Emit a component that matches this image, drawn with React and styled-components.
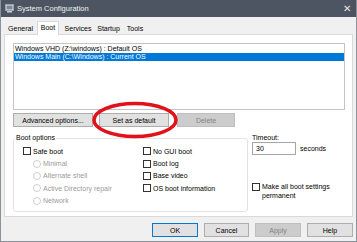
import React from 'react';
import styled, { createGlobalStyle } from 'styled-components';

const GlobalStyle = createGlobalStyle`
  html, body {
    margin: 0;
    padding: 0;
    background: #f0f0f0;
  }
  body {
    font-family: "Liberation Sans", Arial, sans-serif;
    font-size: 7px;
    color: #000;
  }
`;

const Window = styled.div`
  position: relative;
  width: 357px;
  height: 242px;
  box-sizing: border-box;
  background: #f0f0f0;
  border: 1px solid #8c9299;
  border-top: none;
  display: flex;
  flex-direction: column;
  overflow: hidden;
`;

const TitleBar = styled.div`
  height: 17px;
  margin: 0 -1px;
  background: #4c5561;
  color: #f2f2f2;
  display: flex;
  align-items: center;
  padding: 0 0 0 5px;
  font-size: 7.5px;
`;

const TitleText = styled.span`
  margin-left: 3px;
  flex: 1;
`;

const Close = styled.span`
  width: 20px;
  text-align: center;
  font-size: 10px;
  color: #e6e6e6;
`;

const TabStrip = styled.div`
  display: flex;
  align-items: flex-end;
  height: 16px;
  padding: 0 0 0 3px;
  margin-top: 1px;
`;

const Tab = styled.div`
  width: ${p => p.$w}px;
  height: ${p => (p.$active ? '14px' : '12px')};
  box-sizing: border-box;
  display: flex;
  justify-content: center;
  line-height: 12px;
  white-space: nowrap;
  background: ${p => (p.$active ? '#fff' : 'transparent')};
  border: 1px solid ${p => (p.$active ? '#d9d9d9' : 'transparent')};
  border-bottom: none;
  margin-bottom: ${p => (p.$active ? '-1px' : '0')};
  position: relative;
  z-index: 1;
`;

const Panel = styled.div`
  margin: 0 3px;
  height: 183px;
  box-sizing: border-box;
  background: #fff;
  border: 1px solid #d9d9d9;
  padding: 8px 7px 0 8px;
`;

const ListBox = styled.div`
  height: 67px;
  box-sizing: border-box;
  border: 1px solid #c4c4c4;
  padding-top: 1px;
`;

const ListItem = styled.div`
  height: 7.8px;
  line-height: 7.8px;
  padding-left: 1px;
  white-space: nowrap;
  background: ${p => (p.$selected ? '#0078d7' : 'transparent')};
  color: ${p => (p.$selected ? '#fff' : '#000')};
`;

const ButtonRow = styled.div`
  display: flex;
  margin-top: 3px;
`;

const Button = styled.div`
  width: ${p => p.$w}px;
  height: 14px;
  box-sizing: border-box;
  display: flex;
  align-items: center;
  justify-content: center;
  white-space: nowrap;
  background: ${p => (p.$disabled ? '#cccccc' : '#e1e1e1')};
  border: 1px solid ${p => (p.$default ? '#0078d7' : p.$disabled ? '#bfbfbf' : '#adadad')};
  color: ${p => (p.$disabled ? '#838383' : '#000')};
  margin-left: ${p => p.$ml || 0}px;
`;

const Lower = styled.div`
  display: flex;
  margin-top: 11px;
`;

const Group = styled.div`
  width: 235px;
  height: 74px;
  box-sizing: border-box;
  border: 1px solid #e3e3e3;
  border-radius: 3px;
  display: flex;
  padding: 6px 0 0 9px;
  position: relative;
`;

const GroupLabel = styled.span`
  position: absolute;
  top: -5px;
  left: 1px;
  line-height: 8px;
  background: #fff;
  padding: 0 1px;
`;

const Column = styled.div`
  display: flex;
  flex-direction: column;
  width: ${p => p.$w || 'auto'}${p => (p.$w ? 'px' : '')};
  padding-left: ${p => p.$pl || 0}px;
`;

const Row = styled.div`
  display: flex;
  align-items: center;
  height: 12.4px;
  color: ${p => (p.$disabled ? '#9b9b9b' : '#000')};
  white-space: nowrap;
`;

const Box = styled.span`
  width: 8px;
  height: 8px;
  box-sizing: border-box;
  border: 1px solid #333;
  background: #fff;
  margin-right: 2px;
  flex: none;
`;

const Radio = styled.span`
  width: 8px;
  height: 8px;
  box-sizing: border-box;
  border: 1px solid #cfcfcf;
  border-radius: 50%;
  margin-right: 2px;
  flex: none;
`;

const Side = styled.div`
  display: flex;
  flex-direction: column;
  padding-left: 4px;
  margin-top: -5px;
`;

const Label = styled.div`
  height: 9px;
  line-height: 9px;
`;

const TimeoutRow = styled.div`
  display: flex;
  align-items: center;
  gap: 4px;
`;

const Input = styled.div`
  width: 44px;
  height: 13px;
  box-sizing: border-box;
  border: 1px solid #a6a6a6;
  padding-left: 3px;
  line-height: 11px;
`;

const Permanent = styled.div`
  display: flex;
  align-items: flex-start;
  margin-top: 28px;
  line-height: 8.5px;
`;

const Footer = styled.div`
  display: flex;
  justify-content: flex-end;
  gap: 6px;
  padding: 6px 3px 0 0;
`;

const Ellipse = styled.svg`
  position: absolute;
  left: 91px;
  top: 101px;
  pointer-events: none;
`;

function AppIcon() {
  return (
    <svg width="9" height="9" viewBox="0 0 9 9">
      <rect x="0.5" y="0.5" width="8" height="6" fill="#dfe3e8" stroke="#9aa3ad" />
      <rect x="1.5" y="1.5" width="6" height="4" fill="#7f8a96" />
      <rect x="2" y="7" width="5" height="1.5" fill="#c9ced4" />
    </svg>
  );
}

export default function App() {
  return (
    <>
      <GlobalStyle />
      <Window>
        <TitleBar>
          <AppIcon />
          <TitleText>System Configuration</TitleText>
          <Close>✕</Close>
        </TitleBar>
        <TabStrip>
          <Tab $w={33}>General</Tab>
          <Tab $w={22} $active>Boot</Tab>
          <Tab $w={38}>Services</Tab>
          <Tab $w={23}>Startup</Tab>
          <Tab $w={30}>Tools</Tab>
        </TabStrip>
        <Panel>
          <ListBox>
            <ListItem>Windows VHD (Z:\windows) : Default OS</ListItem>
            <ListItem $selected>Windows Main (C:\Windows) : Current OS</ListItem>
          </ListBox>
          <ButtonRow>
            <Button $w={80}>Advanced options...</Button>
            <Button $w={70} $ml={6}>Set as default</Button>
            <Button $w={58} $ml={8} $disabled>Delete</Button>
          </ButtonRow>
          <Lower>
            <Group>
              <GroupLabel>Boot options</GroupLabel>
              <Column $w={120}>
                <Row><Box />Safe boot</Row>
                <Column $pl={10}>
                  <Row $disabled><Radio />Minimal</Row>
                  <Row $disabled><Radio />Alternate shell</Row>
                  <Row $disabled><Radio />Active Directory repair</Row>
                  <Row $disabled><Radio />Network</Row>
                </Column>
              </Column>
              <Column $w={100}>
                <Row><Box />No GUI boot</Row>
                <Row><Box />Boot log</Row>
                <Row><Box />Base video</Row>
                <Row><Box />OS boot information</Row>
              </Column>
            </Group>
            <Side>
              <Label>Timeout:</Label>
              <TimeoutRow>
                <Input>30</Input>
                <span>seconds</span>
              </TimeoutRow>
              <Permanent>
                <Box />
                <span>Make all boot settings<br />permanent</span>
              </Permanent>
            </Side>
          </Lower>
        </Panel>
        <Footer>
          <Button $w={46} $default>OK</Button>
          <Button $w={45}>Cancel</Button>
          <Button $w={46} $disabled>Apply</Button>
          <Button $w={46}>Help</Button>
        </Footer>
        <Ellipse width="88" height="40" viewBox="0 0 88 40">
          <ellipse cx="43" cy="19" rx="41" ry="16.5" fill="none" stroke="#e0121b" strokeWidth="3.5" />
        </Ellipse>
      </Window>
    </>
  );
}
